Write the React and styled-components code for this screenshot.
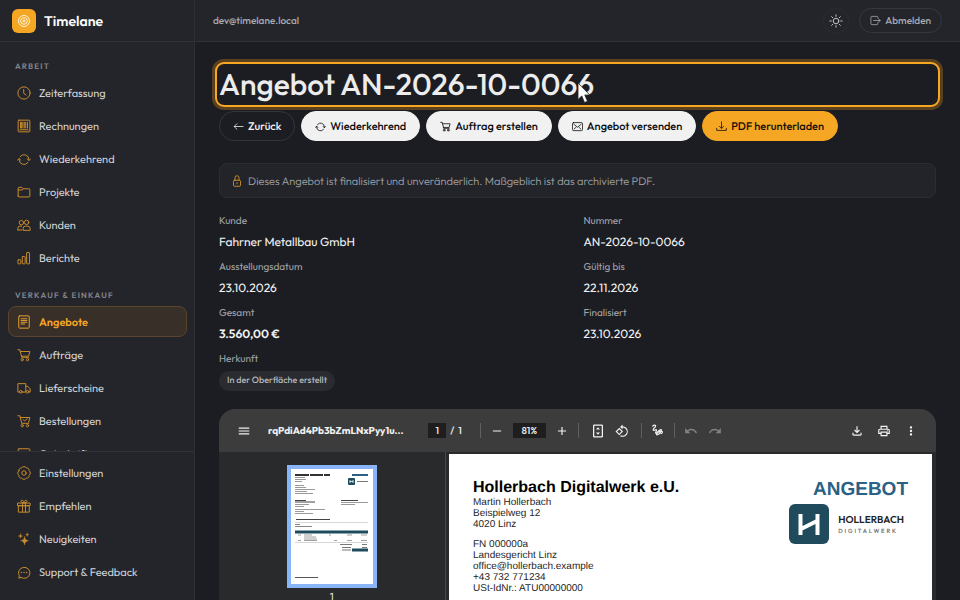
import styled, { createGlobalStyle } from "styled-components";
import {
  MdMenu,
  MdRemove,
  MdAdd,
  MdRotate90DegreesCcw,
  MdUndo,
  MdRedo,
  MdOutlineFileDownload,
  MdOutlinePrint,
  MdMoreVert,
} from "react-icons/md";

const GlobalStyle = createGlobalStyle`
  * {
    box-sizing: border-box;
  }

  body {
    margin: 0;
    background: #1c1d22;
    color: #ececec;
    font-family: Outfit, Lato, "Liberation Sans", sans-serif;
    font-size: 12px;
    text-rendering: geometricPrecision;
  }

  button {
    font-family: inherit;
    text-rendering: inherit;
    cursor: pointer;
  }
`;

/* ---------- icons ---------- */

const IconSvg = styled.svg`
  width: ${props => props.$size || 14}px;
  height: ${props => props.$size || 14}px;
  flex-shrink: 0;
  fill: none;
  stroke: currentColor;
  stroke-width: 1.7;
  stroke-linecap: round;
  stroke-linejoin: round;
`;

const shapes = {
  clock: <><circle cx="12" cy="12" r="10.5" /><path d="M11.5 6v6.500l4 3" /></>,
  invoice: (
    <>
      <rect x="2" y="2" width="20" height="20" rx="1.500" />
      <path d="M6 5.500v10M8 5.500v10M10 5.500v10M12.500 5.500v10M15 5.500v10M18 5.500v10M5 18.500h14" />
    </>
  ),
  sync: (
    <>
      <path d="M20.400 14.400V13a8.400 8.400 0 0 0-15-5.200M3.600 11.600V13a8.400 8.400 0 0 0 15 5.200" />
      <path d="M1 14l2.600-2.600L6.200 14M23 12l-2.600 2.600L17.800 12" />
    </>
  ),
  folder: <path d="M2 19V5.500A1.500 1.500 0 0 1 3.500 4h5L11 6.500h9.500A1.500 1.500 0 0 1 22 8v11a1.500 1.500 0 0 1-1.500 1.500h-17A1.500 1.500 0 0 1 2 19zM2 8.500h7l2-2" />,
  users: (
    <>
      <circle cx="7.500" cy="8" r="3.800" />
      <circle cx="16.500" cy="7.500" r="3.800" />
      <path d="M1.500 20.500v-3a3.500 3.500 0 0 1 3.500-3.500h3M1.500 20.500h7M10.500 20.500v-2.500a4 4 0 0 1 4-4h4a4 4 0 0 1 4 4v2.500z" />
    </>
  ),
  bars: (
    <>
      <rect x="1.500" y="15" width="5" height="7" rx="1" />
      <rect x="9" y="9.500" width="5" height="12.500" rx="1" />
      <rect x="16.500" y="2.500" width="5" height="19.500" rx="1" />
    </>
  ),
  document: (
    <>
      <rect x="3" y="1.500" width="18" height="21" rx="1.500" />
      <path d="M7 6.500h10M7 9.500h10M7 12.500h10M7 15.500h6" />
    </>
  ),
  cart: (
    <>
      <path d="M1.500 3h3.500l3 13h12M5.500 6H22l-2 8H7.800" />
      <circle cx="9" cy="20" r="2" />
      <circle cx="18" cy="20" r="2" />
    </>
  ),
  cartCheck: (
    <>
      <path d="M1.500 3h3.500l3 13h12M5.500 6H22l-2 8M10.500 9.500l2.500 2.500 4.500-4" />
      <circle cx="9" cy="20" r="2" />
      <circle cx="18" cy="20" r="2" />
    </>
  ),
  truck: (
    <>
      <path d="M4 19H1.500V4.500H15V19H9M15 9h3.500l4 4.500V19h-1.500" />
      <circle cx="6.500" cy="18.500" r="2.300" />
      <circle cx="18" cy="18.500" r="2.300" />
    </>
  ),
  note: <><rect x="2" y="3" width="20" height="18" rx="1.500" /><path d="M6 8h12M6 12h12" /></>,
  gear: (
    <>
      <path d="M3.200 8.200a4.300 4.300 0 0 1 5-5 4.500 4.500 0 0 1 7.600 0 4.300 4.300 0 0 1 5 5 4.500 4.500 0 0 1 0 7.600 4.300 4.300 0 0 1-5 5 4.500 4.500 0 0 1-7.600 0 4.300 4.300 0 0 1-5-5 4.500 4.500 0 0 1 0-7.600z" />
      <circle cx="12" cy="12" r="3.800" />
    </>
  ),
  gift: (
    <>
      <path d="M1.500 7h21v4.500h-21zM3 11.500h18v11H3zM9.500 7v15.500M14.500 7v15.500" />
      <path d="M12 6.500C8 6.500 6 5 7 3s4-1 5 3.500c1-4.500 4-5.500 5-3.500s-1 3.500-5 3.500z" />
    </>
  ),
  sparkles: (
    <path
      fill="currentColor"
      strokeWidth="0.5"
      d="M13 7.500c.8 5 2.500 6.500 7 7.500-4.500 1-6.200 2.500-7 7.500-.8-5-2.500-6.500-7-7.500 4.500-1 6.200-2.500 7-7.500zM6 3c.5 2.800 1.200 3.500 4 4-2.800.5-3.500 1.200-4 4-.5-2.800-1.200-3.500-4-4 2.800-.5 3.500-1.200 4-4zM17.500 1.500c.4 1.800 1 2.400 3 3-2 .6-2.600 1.200-3 3-.4-1.800-1-2.400-3-3 2-.6 2.600-1.200 3-3z"
    />
  ),
  chat: (
    <>
      <path d="M7 21.500l-4 1 1-4A9.800 9.500 0 1 1 7 21.500z" />
      <path strokeWidth="2.500" d="M7.500 13h.1M12 13h.1M16.500 13h.1" />
    </>
  ),
  arrowLeft: <path d="M22 12H3M8.500 6L2.500 12l6 6" />,
  mail: (
    <>
      <rect x="1" y="3.500" width="22" height="17.500" rx="2.500" />
      <path d="M4 7l8 6.500L20 7M4.500 17.500l4.500-4M19.500 17.500l-4.500-4" />
    </>
  ),
  download: <path d="M12 2v14M7.500 11.500L12 16l4.500-4.500M1.500 16v4.500h21V16" />,
  lock: (
    <>
      <rect x="5" y="10.500" width="14" height="12" rx="2" />
      <path d="M8 10.500V5.500a4 4 0 0 1 8 0v5M12 15.500v2" />
    </>
  ),
  sun: (
    <>
      <circle cx="12" cy="12" r="4.800" />
      <path d="M12 1.500v2.500M12 20v2.500M1.500 12H4M20 12h2.500M4.600 4.600l1.700 1.700M17.700 17.700l1.700 1.700M4.600 19.400l1.700-1.700M17.700 6.300l1.700-1.700" />
    </>
  ),
  logout: <path d="M17 7V5a2 2 0 0 0-2-2H4a2 2 0 0 0-2 2v14a2 2 0 0 0 2 2h11a2 2 0 0 0 2-2v-2M8 12h14M18.500 8.500L22.500 12l-4 3.500" />,
  fitPage: (
    <>
      <rect x="4.500" y="2" width="15" height="20" rx="1" strokeWidth="2.200" />
      <path fill="currentColor" stroke="none" d="M12 5.500l3.500 4h-7zM12 18.500l3.500-4h-7z" />
    </>
  ),
  draw: <path strokeWidth="2.200" d="M3 4c2-2 6-3 5.500 0S3 8.500 4 11s4.500-1.500 6-.5-2.500 5-1.500 6.500 3.500-2 6-4.500 5-3 5-1-4 6.500-6.500 8-3.500.5-2-2 4-4.500 7.500-4.500 3 4.500 0 5" />,
};

const Icon = ({ name, size }) => (
  <IconSvg viewBox="0 0 24 24" $size={size} aria-hidden="true">
    {shapes[name]}
  </IconSvg>
);

/* ---------- sidebar ---------- */

const Layout = styled.div`
  display: flex;
  height: 100vh;
  overflow: hidden;
`;

const Sidebar = styled.aside`
  display: flex;
  flex-direction: column;
  width: 195px;
  flex-shrink: 0;
  background: #23252b;
  border-right: 1px solid #2d2f35;
`;

const Brand = styled.div`
  display: flex;
  align-items: center;
  gap: 8px;
  height: 42px;
  flex-shrink: 0;
  padding: 0 12px;
  border-bottom: 1px solid #2f3137;
  color: #fafafa;
  font-size: 14px;
  font-weight: 600;
`;

const BrandMark = styled.span`
  display: grid;
  place-items: center;
  width: 24px;
  height: 24px;
  border-radius: 6px;
  background: #f5a623;
  color: #fff6e0;
`;

const NavScroll = styled.nav`
  flex: 1;
  min-height: 0;
  overflow: hidden;
  padding: 20px 7px 0 8px;
`;

const NavFooter = styled.nav`
  flex-shrink: 0;
  padding: 5px 7px 13px 8px;
  border-top: 1px solid #303238;
`;

const NavHeading = styled.h2`
  margin: 0 0 5px;
  padding: 0 7px;
  color: #83858c;
  font-size: 8px;
  line-height: 10px;
  font-weight: 600;
  letter-spacing: 0.15em;
  text-transform: uppercase;
`;

const NavList = styled.ul`
  display: grid;
  gap: 2px;
  margin: 0;
  padding: 0;
  list-style: none;

  & + h2 {
    margin-top: 18px;
  }
`;

const NavLink = styled.a`
  display: flex;
  align-items: center;
  gap: 8px;
  height: 31px;
  padding: 0 8px;
  border: 1px solid ${props => (props.$active ? "#59452a" : "transparent")};
  border-radius: 8px;
  background: ${props => (props.$active ? "#382f29" : "transparent")};
  color: ${props => (props.$active ? "#f5a623" : "#d3d3d5")};
  font-size: 11px;
  font-weight: ${props => (props.$active ? 600 : 400)};
  text-decoration: none;

  svg {
    color: ${props => (props.$active ? "#e5a034" : "#c88c2e")};
  }
`;

/* ---------- top bar ---------- */

const Page = styled.div`
  display: flex;
  flex: 1;
  flex-direction: column;
  min-width: 0;
`;

const TopBar = styled.header`
  display: flex;
  align-items: center;
  gap: 10px;
  height: 42px;
  flex-shrink: 0;
  padding: 0 18px;
  border-bottom: 1px solid #2f3137;
  background: #23252b;
  color: #a9abb1;
`;

const Account = styled.span`
  margin-right: auto;
  font-size: 10px;
  font-weight: 500;
`;

const ThemeButton = styled.button`
  display: grid;
  place-items: center;
  width: 26px;
  height: 26px;
  padding: 0;
  border: 1px solid #2a2c32;
  border-radius: 50%;
  background: transparent;
  color: #c4c6ca;
`;

const LogoutButton = styled.button`
  display: flex;
  align-items: center;
  gap: 4px;
  height: 25px;
  padding: 0 10px;
  border: 1px solid #36383f;
  border-radius: 13px;
  background: transparent;
  color: #a9abb1;
  font-size: 10px;
  font-weight: 500;
`;

/* ---------- offer ---------- */

const Main = styled.main`
  flex: 1;
  min-height: 0;
  overflow: hidden;
  padding: 24px 24px 0;
`;

const Title = styled.h1`
  margin: 0;
  border-radius: 5px;
  outline: 2px solid #f5a623;
  outline-offset: 2px;
  box-shadow: 0 0 0 2px #1c1d22, 0 0 0 7px #59411f;
  font-size: 30px;
  line-height: 37px;
  font-weight: 500;
`;

const Pointer = styled.svg`
  position: fixed;
  left: 577px;
  top: 82px;
  width: 14px;
  height: 22px;
  pointer-events: none;
`;

const Actions = styled.div`
  display: flex;
  flex-wrap: wrap;
  gap: 6px;
  margin-top: 8px;
`;

const tones = {
  ghost: "background: transparent; border-color: #34363c; color: #f2f2f2;",
  light: "background: #f1f1f1; border-color: #f1f1f1; color: #08090b;",
  accent: "background: #f5a623; border-color: #f5a623; color: #120f08;",
};

const ActionButton = styled.button`
  display: flex;
  align-items: center;
  gap: 4px;
  height: 30px;
  padding: 0 13px;
  border: 1px solid;
  border-radius: 15px;
  font-size: 11px;
  font-weight: 500;
  ${props => tones[props.$tone]}
`;

const Notice = styled.p`
  display: flex;
  align-items: center;
  gap: 5px;
  height: 35px;
  margin: 22px 0 16px;
  padding: 0 11px;
  border: 1px solid #2b2d33;
  border-radius: 8px;
  background: #222429;
  color: #a3a5ab;
  font-size: 11px;
  font-weight: 300;

  svg {
    color: #d99a30;
  }
`;

const Details = styled.dl`
  display: grid;
  grid-template-columns: 1fr 1fr;
  gap: 9px 12px;
  margin: 0;
`;

const Term = styled.dt`
  color: #a3a5ab;
  font-size: 10px;
  line-height: 13px;
  font-weight: 400;
`;

const Value = styled.dd`
  margin: 8px 0 0;
  color: #f2f2f2;
  font-size: 12px;
  line-height: 16px;
  font-weight: ${props => (props.$strong ? 600 : 400)};
`;

const OriginBadge = styled.span`
  display: inline-block;
  padding: 0 8px;
  border-radius: 10px;
  background: #292b30;
  color: #b4b6bb;
  font-size: 9px;
  line-height: 20px;
  font-weight: 500;
`;

const BadgeValue = styled.dd`
  margin: 5px 0 0;
  line-height: 20px;
`;

/* ---------- pdf viewer ---------- */

const Viewer = styled.section`
  margin-top: 18px;
  border-radius: 16px 16px 0 0;
  overflow: hidden;
  background: #282a2b;
  font-family: Roboto, "Liberation Sans", sans-serif;
`;

const ViewerBar = styled.div`
  display: grid;
  grid-template-columns: 1fr auto 1fr;
  align-items: center;
  height: 43px;
  padding: 0 17px;
  background: #3c3c3c;
  color: #f1f1f1;
`;

const BarGroup = styled.div`
  display: flex;
  align-items: center;
  justify-content: ${props => (props.$end ? "flex-end" : "flex-start")};
  gap: ${props => props.$gap || 0}px;
  min-width: 0;
`;

const CenterGroup = styled(BarGroup)`
  margin-right: 4px;
`;

const ViewerButton = styled.button`
  display: grid;
  place-items: center;
  width: 16px;
  height: 16px;
  padding: 0;
  border: none;
  background: none;
  color: #f1f1f1;
  font-size: 14px;

  &:disabled {
    color: #828282;
  }
`;

const FileName = styled.span`
  font-family: Outfit, Lato, sans-serif;
  font-size: 10px;
  font-weight: 700;
`;

const PageInput = styled.input`
  width: 18px;
  height: 15px;
  padding: 0;
  border: none;
  background: #1e1e1e;
  color: #f1f1f1;
  font-family: Outfit, Lato, sans-serif;
  font-size: 10px;
  font-weight: 500;
  text-align: center;
`;

const ZoomInput = styled(PageInput)`
  width: 33px;
`;

const PageCount = styled.label`
  display: flex;
  align-items: center;
  gap: 4px;
  margin-right: 10px;
  font-family: Outfit, Lato, sans-serif;
  font-size: 10px;
  font-weight: 500;
  white-space: pre;
`;

const Divider = styled.span`
  width: 1px;
  height: 15px;
  background: #606060;
`;

const PageTools = styled(BarGroup)`
  margin: 0 3px;
`;

const ViewerBody = styled.div`
  display: flex;
  height: 640px;
`;

const Thumbnails = styled.div`
  display: flex;
  flex-direction: column;
  align-items: center;
  gap: 4px;
  width: 227px;
  flex-shrink: 0;
  padding: 13px 0;
  border-right: 1px solid #47494a;
  font-size: 10px;
`;

const ThumbButton = styled.button`
  padding: 0;
  border: 4px solid #8ab4f8;
  background: #fff;
  line-height: 0;

  svg {
    width: 82px;
    height: 115px;
  }
`;

const PageArea = styled.div`
  flex: 1;
  min-width: 0;
  padding: 2px 4px 0 3px;
`;

const Sheet = styled.article`
  display: flex;
  justify-content: space-between;
  height: 100%;
  padding: 25px 24px;
  background: #fff;
  color: #1f1f1f;
  font-family: "Liberation Sans", sans-serif;
`;

const Sender = styled.div`
  h3 {
    margin: 0;
    color: #000;
    font-size: 16px;
    line-height: 18px;
  }

  p {
    margin: 0 0 9px;
    font-size: 10px;
    line-height: 11px;
  }
`;

const SheetHead = styled.div`
  display: flex;
  flex-direction: column;
  align-items: flex-end;

  strong {
    color: #2b6184;
    font-size: 19px;
    line-height: 22px;
  }
`;

const Company = styled.div`
  display: flex;
  align-items: center;
  gap: 9px;
  margin-top: 3px;
  padding-right: 4px;
`;

const CompanyMark = styled.svg`
  width: 40px;
  height: 40px;
`;

const CompanyName = styled.div`
  display: grid;
  gap: 3px;
  color: #222;
  font-family: Outfit, Lato, sans-serif;
  font-size: 10px;
  line-height: 11px;
  font-weight: 600;

  small {
    color: #666;
    font-size: 6px;
    line-height: 7px;
    font-weight: 500;
    letter-spacing: 0.3em;
  }
`;

const workLinks = [
  { icon: "clock", label: "Zeiterfassung" },
  { icon: "invoice", label: "Rechnungen" },
  { icon: "sync", label: "Wiederkehrend" },
  { icon: "folder", label: "Projekte" },
  { icon: "users", label: "Kunden" },
  { icon: "bars", label: "Berichte" },
];

const tradeLinks = [
  { icon: "document", label: "Angebote", active: true },
  { icon: "cart", label: "Aufträge" },
  { icon: "truck", label: "Lieferscheine" },
  { icon: "cartCheck", label: "Bestellungen" },
  { icon: "note", label: "Gutschriften" },
];

const footerLinks = [
  { icon: "gear", label: "Einstellungen" },
  { icon: "gift", label: "Empfehlen" },
  { icon: "sparkles", label: "Neuigkeiten" },
  { icon: "chat", label: "Support & Feedback" },
];

const actions = [
  { icon: "arrowLeft", label: "Zurück", tone: "ghost" },
  { icon: "sync", label: "Wiederkehrend", tone: "light" },
  { icon: "cart", label: "Auftrag erstellen", tone: "light" },
  { icon: "mail", label: "Angebot versenden", tone: "light" },
  { icon: "download", label: "PDF herunterladen", tone: "accent" },
];

const details = [
  { term: "Kunde", value: "Fahrner Metallbau GmbH" },
  { term: "Nummer", value: "AN-2026-10-0066" },
  { term: "Ausstellungsdatum", value: "23.10.2026" },
  { term: "Gültig bis", value: "22.11.2026" },
  { term: "Gesamt", value: "3.560,00 €", strong: true },
  { term: "Finalisiert", value: "23.10.2026" },
];

const Links = ({ items }) => (
  <NavList>
    {items.map(item => (
      <li key={item.label}>
        <NavLink href="#" $active={item.active} aria-current={item.active ? "page" : undefined}>
          <Icon name={item.icon} />
          {item.label}
        </NavLink>
      </li>
    ))}
  </NavList>
);

// Miniature of the first page, one unit per pixel
const PageThumb = () => (
  <svg viewBox="0 0 82 115" aria-hidden="true">
    <path stroke="#333" strokeWidth="2" d="M4 6h35" strokeDasharray="14 1 13 1 6" />
    <path stroke="#999" strokeWidth="1" d="M4 8.500h10M4 10.500h11M4 12.500h7M4 16.500h9M4 18.500h11M4 20.500h20M4 22.500h12M4 24.500h18" />
    <path stroke="#2b6184" strokeWidth="2" d="M61 6h16" />
    <rect x="57" y="9" width="7" height="7" rx="1" fill="#1f4b5c" />
    <path stroke="#fff" d="M59 11v3M62 11v3M59 12.500h3" strokeWidth="0.8" />
    <path stroke="#777" strokeWidth="1" d="M66 12.500h11" />
    <path stroke="#444" strokeWidth="1" d="M4 31.500h11M4 33h20M50 31.500h17" />
    <path stroke="#999" strokeWidth="1" d="M4 35.500h14M4 37.500h9M4 40.500h30M4 42.500h9M4 44.500h18M50 33.500h27M50 35.500h14" />
    <path stroke="#444" strokeWidth="1" d="M5 50.500h34" />
    <path stroke="#bbb" strokeWidth="0.6" d="M4 53.500h73M4 73.500h73" />
    <path stroke="#888" strokeWidth="1" d="M4 55.500h5M4 57.500h17" />
    <path fill="#1f4b5c" d="M4 61.500h73v3H4zM61 79.500h16v3H61z" />
    <path stroke="#888" strokeWidth="0.800" d="M7 66h3M13 66h8M13 68h12M13 70h13M38 66h2M56 66h5M70 66h6M7 71.500h3M13 71.500h13M43 71.500h3M56 71.500h5M70 71.500h6" />
    <path stroke="#555" strokeWidth="0.800" d="M49 75.500h12M71 75.500h5M51 78.500h9M71 78.500h5M51 81h9" />
    <path stroke="#555" strokeWidth="1" d="M4 108.500h23" />
  </svg>
);

const App = () => {
  return (
    <Layout>
      <GlobalStyle />
      <Sidebar>
        <Brand>
          <BrandMark>
            <svg width="14" height="14" viewBox="0 0 14 14" fill="none" stroke="currentColor">
              <circle cx="7" cy="7" r="5.500" />
              <circle cx="7" cy="7" r="3.300" />
              <circle cx="7" cy="7" r="1.100" />
            </svg>
          </BrandMark>
          Timelane
        </Brand>
        <NavScroll aria-label="Hauptnavigation">
          <NavHeading>Arbeit</NavHeading>
          <Links items={workLinks} />
          <NavHeading>Verkauf &amp; Einkauf</NavHeading>
          <Links items={tradeLinks} />
        </NavScroll>
        <NavFooter aria-label="Konto">
          <Links items={footerLinks} />
        </NavFooter>
      </Sidebar>

      <Page>
        <TopBar>
          <Account>dev@timelane.local</Account>
          <ThemeButton aria-label="Design wechseln">
            <Icon name="sun" size={14} />
          </ThemeButton>
          <LogoutButton>
            <Icon name="logout" size={11} />
            Abmelden
          </LogoutButton>
        </TopBar>

        <Main>
          <Title>Angebot AN-2026-10-0066</Title>
          <Actions>
            {actions.map(action => (
              <ActionButton key={action.label} $tone={action.tone}>
                <Icon name={action.icon} size={11} />
                {action.label}
              </ActionButton>
            ))}
          </Actions>

          <Notice>
            <Icon name="lock" size={12} />
            Dieses Angebot ist finalisiert und unveränderlich. Maßgeblich ist das archivierte PDF.
          </Notice>

          <Details>
            {details.map(item => (
              <div key={item.term}>
                <Term>{item.term}</Term>
                <Value $strong={item.strong}>{item.value}</Value>
              </div>
            ))}
            <div>
              <Term>Herkunft</Term>
              <BadgeValue>
                <OriginBadge>In der Oberfläche erstellt</OriginBadge>
              </BadgeValue>
            </div>
          </Details>

          <Viewer aria-label="PDF">
            <ViewerBar>
              <BarGroup $gap={16}>
                <ViewerButton aria-label="Menü"><MdMenu /></ViewerButton>
                <FileName>rqPdiAd4Pb3bZmLNxPyy1u...</FileName>
              </BarGroup>
              <CenterGroup $gap={8}>
                <PageCount>
                  <PageInput defaultValue="1" aria-label="Seite" />
                  /  1
                </PageCount>
                <Divider />
                <ViewerButton aria-label="Verkleinern"><MdRemove /></ViewerButton>
                <ZoomInput defaultValue="81%" aria-label="Zoom" />
                <ViewerButton aria-label="Vergrößern"><MdAdd /></ViewerButton>
                <Divider />
                <PageTools $gap={8}>
                  <ViewerButton aria-label="An Seite anpassen"><Icon name="fitPage" size={14} /></ViewerButton>
                  <ViewerButton aria-label="Drehen"><MdRotate90DegreesCcw /></ViewerButton>
                </PageTools>
                <Divider />
                <ViewerButton aria-label="Zeichnen"><Icon name="draw" size={13} /></ViewerButton>
                <Divider />
                <ViewerButton aria-label="Rückgängig" disabled><MdUndo /></ViewerButton>
                <ViewerButton aria-label="Wiederholen" disabled><MdRedo /></ViewerButton>
              </CenterGroup>
              <BarGroup $end $gap={11}>
                <ViewerButton aria-label="Herunterladen"><MdOutlineFileDownload /></ViewerButton>
                <ViewerButton aria-label="Drucken"><MdOutlinePrint /></ViewerButton>
                <ViewerButton aria-label="Mehr"><MdMoreVert /></ViewerButton>
              </BarGroup>
            </ViewerBar>
            <ViewerBody>
              <Thumbnails>
                <ThumbButton aria-label="Seite 1"><PageThumb /></ThumbButton>
                1
              </Thumbnails>
              <PageArea>
                <Sheet>
                  <Sender>
                    <h3>Hollerbach Digitalwerk e.U.</h3>
                    <p>
                      Martin Hollerbach<br />
                      Beispielweg 12<br />
                      4020 Linz
                    </p>
                    <p>
                      FN 000000a<br />
                      Landesgericht Linz<br />
                      office@hollerbach.example<br />
                      +43 732 771234<br />
                      USt-IdNr.: ATU00000000
                    </p>
                  </Sender>
                  <SheetHead>
                    <strong>ANGEBOT</strong>
                    <Company>
                      <CompanyMark viewBox="0 0 40 40" aria-hidden="true">
                        <rect width="40" height="40" rx="6" fill="#1f4b5c" />
                        <path fill="none" stroke="#fff" strokeWidth="4" d="M11.500 10v21M28.500 10v21M12 25l16-8" />
                      </CompanyMark>
                      <CompanyName>
                        HOLLERBACH
                        <small>DIGITALWERK</small>
                      </CompanyName>
                    </Company>
                  </SheetHead>
                </Sheet>
              </PageArea>
            </ViewerBody>
          </Viewer>
        </Main>
      </Page>

      <Pointer viewBox="0 0 14 22" aria-hidden="true">
        <path fill="#fff" stroke="#222" strokeWidth="0.800" d="M1 1v16.500l3.800-3.500 2.700 6.500 3-1.200-2.700-6.300h5z" />
      </Pointer>
    </Layout>
  );
};

export default App;
